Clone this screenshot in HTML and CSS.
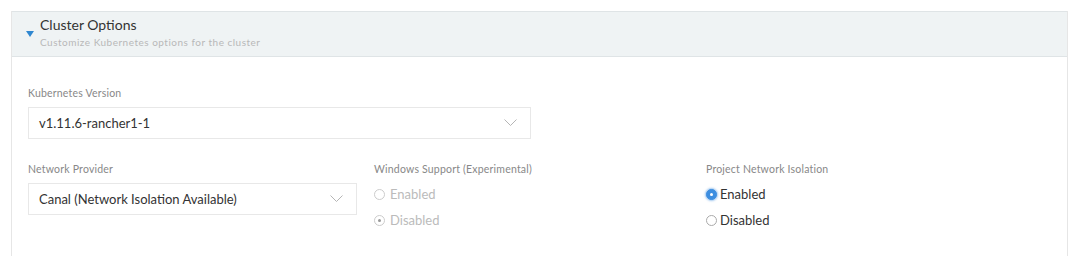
FILE: index.html
```html
<!DOCTYPE html>
<html lang="en">
  <head>
    <meta charset="UTF-8" />
    <title>Cluster Options</title>
    <link rel="stylesheet" href="styles.css">
  </head>
  <body>
    <section class="accordion">
      <div class="accordion-header">
        <span class="caret"></span>
        <div>
          <h2 class="accordion-title">Cluster Options</h2>
          <p class="accordion-sub">Customize Kubernetes options for the cluster</p>
        </div>
      </div>

      <div class="accordion-body">
        <div class="field">
          <label class="field-label">Kubernetes Version</label>
          <div class="select select-wide">
            <span>v1.11.6-rancher1-1</span>
            <svg class="chevron" width="13" height="8" viewBox="0 0 13 8"><path d="M0.5 0.5 L6.5 6.5 L12.5 0.5" fill="none" stroke="#b5b5b5" stroke-width="1"/></svg>
          </div>
        </div>

        <div class="row">
          <div class="field">
            <label class="field-label">Network Provider</label>
            <div class="select">
              <span>Canal (Network Isolation Available)</span>
              <svg class="chevron" width="13" height="8" viewBox="0 0 13 8"><path d="M0.5 0.5 L6.5 6.5 L12.5 0.5" fill="none" stroke="#b5b5b5" stroke-width="1"/></svg>
            </div>
          </div>

          <div class="field">
            <label class="field-label">Windows Support (Experimental)</label>
            <div class="radio-stack disabled">
              <label class="radio"><span class="dot"></span>Enabled</label>
              <label class="radio"><span class="dot checked"></span>Disabled</label>
            </div>
          </div>

          <div class="field">
            <label class="field-label">Project Network Isolation</label>
            <div class="radio-stack">
              <label class="radio"><span class="dot on"></span>Enabled</label>
              <label class="radio"><span class="dot"></span>Disabled</label>
            </div>
          </div>
        </div>
      </div>
    </section>
  </body>
</html>
```

FILE: styles.css
```css
* {
  margin: 0;
  padding: 0;
  box-sizing: border-box;
}

html,
body {
  height: 256px;
  overflow: hidden;
}

body {
  font-family: Lato, "Open Sans", sans-serif;
  background: white;
  color: #333;
  padding: 11px 12px 0 11px;
}

.accordion {
  border-left: 1px solid #e6e6e6;
  border-right: 1px solid #e6e6e6;
  height: 245px;
}

.accordion-header {
  display: flex;
  align-items: flex-start;
  gap: 6px;
  background: #eff3f4;
  border-top: 1px solid #dfe4e6;
  border-bottom: 1px solid #dfe4e6;
  height: 46px;
  padding: 4px 14px;
}

.caret {
  width: 0;
  height: 0;
  border-left: 4.5px solid transparent;
  border-right: 4.5px solid transparent;
  border-top: 6px solid #2f87d0;
  margin-top: 15px;
}

.accordion-title {
  font-size: 14px;
  font-weight: 400;
  color: #333;
  line-height: 18px;
}

.accordion-sub {
  font-size: 10px;
  letter-spacing: 0.5px;
  color: #b8b8b8;
  margin-top: 2px;
}

.accordion-body {
  padding: 30px 16px 0 16px;
}

.field-label {
  display: block;
  font-size: 10.5px;
  letter-spacing: 0.2px;
  color: #888;
  margin-bottom: 8px;
}

.select {
  display: flex;
  align-items: center;
  justify-content: space-between;
  height: 32px;
  border: 1px solid #e8e8e8;
  padding: 0 10px;
  font-size: 13px;
  color: #333;
  width: 329px;
}

.select-wide {
  width: 503px;
}

.chevron {
  margin-right: 3px;
}

.row {
  display: grid;
  grid-template-columns: 346px 332px 1fr;
  margin-top: 24px;
}

.radio-stack {
  display: flex;
  flex-direction: column;
  gap: 8px;
  margin-top: 10px;
}

.radio {
  display: flex;
  align-items: center;
  gap: 3px;
  font-size: 13px;
  line-height: 18px;
  color: #333;
}

.disabled .radio {
  color: #bbb;
  gap: 5px;
}

.dot {
  width: 11px;
  height: 11px;
  border-radius: 50%;
  border: 1px solid #aaa;
  background: white;
  display: inline-flex;
  align-items: center;
  justify-content: center;
}

.disabled .dot {
  border-color: #ccc;
}

.dot.checked::after {
  content: "";
  width: 3px;
  height: 3px;
  border-radius: 50%;
  background: #999;
}

.dot.on {
  background: #3d8ee0;
  border-color: #3d8ee0;
  box-shadow: 0 0 2px 1px rgba(61, 142, 224, 0.5);
}

.dot.on::after {
  content: "";
  width: 3px;
  height: 3px;
  border-radius: 50%;
  background: white;
}
```
